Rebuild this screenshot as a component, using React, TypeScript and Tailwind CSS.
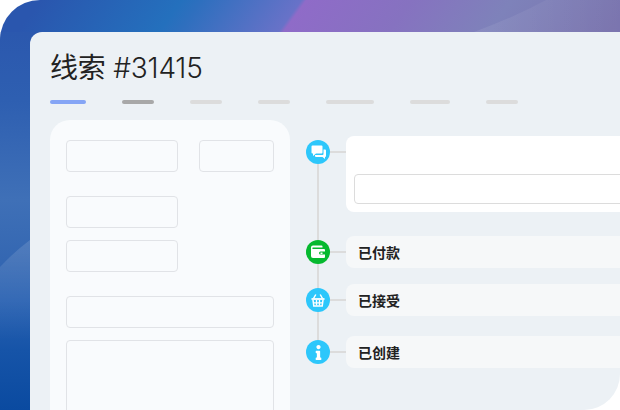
import { FaInfo } from "react-icons/fa";
import { ReactNode } from "react";

const field = "h-8 rounded border border-[#e1e3e7]";
const tabs = [
  "w-9 bg-[#85a5f5]",
  "w-8 bg-[#a8a8a8]",
  "w-8 bg-[#dcdcdc]",
  "w-8 bg-[#dcdcdc]",
  "w-12 bg-[#dcdcdc]",
  "w-10 bg-[#dcdcdc]",
  "w-8 bg-[#dcdcdc]",
];

function Dot({ color, children }: { color: string; children: ReactNode }) {
  return (
    <div className={`relative flex h-6 w-6 shrink-0 items-center justify-center rounded-full text-white ${color}`}>
      {children}
    </div>
  );
}

function CommentsIcon() {
  return (
    <svg className="h-6 w-6" viewBox="0 0 24 24" fill="#ffffff">
      <path d="M6.5 5.5h9a1 1 0 0 1 1 1v6a1 1 0 0 1-1 1H10L7 16v-2.5h-.5a1 1 0 0 1-1-1v-6a1 1 0 0 1 1-1z" />
      <path d="M17.5 9.5h1.500a1 1 0 0 1 1 1V16a1 1 0 0 1-1 1v2l-2.500-2H10a1 1 0 0 1-1-1v-1h7.500a1 1 0 0 0 1-1z" />
    </svg>
  );
}

function WalletIcon() {
  return (
    <svg className="h-6 w-6" viewBox="0 0 24 24" fill="#ffffff">
      <path d="M7 5.500h8.500a1 1 0 0 1 1 1V7.500H7a.75.75 0 0 0 0 1.500h11a1 1 0 0 1 1 1v1.500h-4.500a1.500 1.500 0 0 0 0 3H19V17a1 1 0 0 1-1 1H7a2 2 0 0 1-2-2V7.500a2 2 0 0 1 2-2z" />
      <rect x="14.500" y="12.500" width="2" height="1.500" />
    </svg>
  );
}

function BasketIcon() {
  return (
    <svg className="h-6 w-6" viewBox="0 0 24 24" fill="none" stroke="#ffffff" strokeWidth="1.500">
      <path d="M7.500 10.500l2.300-4M16.500 10.500l-2.300-4" />
      <path d="M5.500 11h13" strokeWidth="1.800" />
      <path d="M7 12l.8 6h8.400l.8-6" />
      <path d="M10.500 12v5.500M13.500 12v5.500M7.500 14.800h9" strokeWidth="1.300" />
    </svg>
  );
}

function EventRow({ color, icon, label, className }: { color: string; icon: ReactNode; label: string; className: string }) {
  return (
    <div className={`flex h-8 items-center ${className}`}>
      <Dot color={color}>{icon}</Dot>
      <div className="h-0.5 w-4 bg-[#dcdcdc]" />
      <div className="flex h-8 flex-1 items-center rounded-lg bg-[#f6f8f9] pl-3 text-sm font-bold text-[#222222]">
        {label}
      </div>
    </div>
  );
}

export default function App() {
  return (
    <div className="relative h-[410px] w-[620px] overflow-hidden rounded-tl-[40px] pt-8 pl-[30px] font-['Noto_Sans_CJK_SC',sans-serif]">
      {/* gradient only sits behind the top and left bands, so the card's bottom corner stays clean on white */}
      <div className="absolute top-0 left-0 h-[60px] w-[620px] bg-[linear-gradient(126deg,#2a56ae_33px,#2470bd_147px,#2e6fbe_163px,#6872c8_244px,#8f6bc8_248px,#8672c0_333px,#7e82ba_414px,#7a74ae_511px)]" />
      <div className="absolute top-8 left-0 h-[378px] w-[60px] bg-[linear-gradient(to_bottom,#2b58ae_0px,#2e5fb1_68px,#3f70b7_168px,#3467b2_228px,#2a62b2_268px,#1654a8_318px,#0a4aa0_378px)]" />
      <svg className="absolute top-0 left-0 h-[410px] w-[620px]" viewBox="0 0 620 410" fill="none">
        <defs>
          <linearGradient id="leftShine" x1="0" y1="240" x2="0" y2="340" gradientUnits="userSpaceOnUse">
            <stop offset="0" stopColor="#ffffff" stopOpacity="0.13" />
            <stop offset="1" stopColor="#ffffff" stopOpacity="0" />
          </linearGradient>
          <linearGradient id="topShine" x1="475" y1="0" x2="620" y2="0" gradientUnits="userSpaceOnUse">
            <stop offset="0" stopColor="#ffffff" stopOpacity="0.08" />
            <stop offset="1" stopColor="#ffffff" stopOpacity="0.01" />
          </linearGradient>
        </defs>
        <path d="M0 267 Q14 252 30 240 V340 H0 Z" fill="url(#leftShine)" />
        <path d="M474 32 Q515 17 546 0 H620 V32 Z" fill="url(#topShine)" />
      </svg>
      <div className="relative h-[378px] w-[590px] overflow-hidden rounded-tl-xl rounded-br-[36px] bg-[#ecf1f5] pt-[17px] pl-5">
        <h1 className="text-[28px] leading-[38px] font-light tracking-[-0.2px] text-[#222222] font-['Inter','Noto_Sans_CJK_SC',sans-serif]">
          <span className="font-normal">线索</span> #31415
        </h1>
        <div className="mt-[13px] flex gap-9">
          {tabs.map((t, i) => (
            <div key={i} className={`h-1 rounded-full ${t}`} />
          ))}
        </div>
        <div className="mt-4 flex gap-4">
          <div className="h-[320px] w-60 shrink-0 rounded-t-[20px] bg-[#f9fbfd] px-4 pt-5">
            <div className="flex gap-[21px]">
              <div className={`w-28 ${field}`} />
              <div className={`w-[75px] ${field}`} />
            </div>
            <div className={`mt-6 w-28 ${field}`} />
            <div className={`mt-3 w-28 ${field}`} />
            <div className={`mt-6 w-full ${field}`} />
            <div className="mt-3 h-[100px] w-full rounded border border-[#e1e3e7]" />
          </div>
          <div className="relative w-[340px] shrink-0 pt-4">
            <div className="absolute top-8 left-[11px] h-[200px] w-0.5 bg-[#dcdcdc]" />
            <div className="flex items-start">
              <div className="mt-1 flex items-center">
                <Dot color="bg-[#2dc7fb]"><CommentsIcon /></Dot>
                <div className="h-0.5 w-4 bg-[#dcdcdc]" />
              </div>
              <div className="h-[76px] flex-1 rounded-lg bg-white pt-[38px] pl-2">
                <div className="h-[30px] w-full rounded border border-[#dcdcdc]" />
              </div>
            </div>
            <EventRow className="mt-6" color="bg-[#06b92f]" icon={<WalletIcon />} label="已付款" />
            <EventRow className="mt-4" color="bg-[#2dc7fb]" icon={<BasketIcon />} label="已接受" />
            <EventRow className="mt-5" color="bg-[#2dc7fb]" icon={<FaInfo size={15} />} label="已创建" />
          </div>
        </div>
      </div>
    </div>
  );
}
